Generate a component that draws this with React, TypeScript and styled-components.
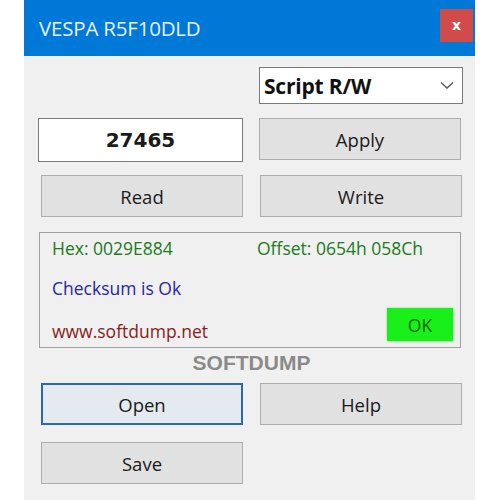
import React from "react";
import styled, { createGlobalStyle } from "styled-components";

const Global = createGlobalStyle`
  html, body { margin: 0; padding: 0; background: #ffffff; }
  body { font-family: "Open Sans", "Noto Sans", sans-serif; }
`;

const Window = styled.div`
  width: 451px;
  height: 500px;
  margin-left: 24px;
  background: #f0f0f0;
  display: flex;
  flex-direction: column;
`;

const TitleBar = styled.div`
  height: 56px;
  background: #0078d7;
  display: flex;
  align-items: center;
  justify-content: space-between;
  padding: 0 2px 0 15px;
  box-sizing: border-box;
`;

const Title = styled.span`
  color: #e6f2ff;
  font-size: 20.5px;
  letter-spacing: -0.2px;
  margin-top: -1px;
`;

const CloseBox = styled.div`
  width: 33px;
  height: 33px;
  margin-top: -6px;
  background: #d24b4b;
  color: #ffffff;
  font-family: "DejaVu Sans", sans-serif;
  font-weight: bold;
  font-size: 14px;
  display: flex;
  align-items: center;
  justify-content: center;
`;

const Content = styled.div`
  display: flex;
  flex-direction: column;
  padding: 11px 13px 0 17px;
`;

const Row = styled.div<{ $top: number; $end?: boolean }>`
  display: flex;
  justify-content: ${(p) => (p.$end ? "flex-end" : "flex-start")};
  align-items: flex-start;
  gap: 17px;
  margin-top: ${(p) => p.$top}px;
`;

const Combo = styled.div`
  width: 204px;
  height: 37px;
  box-sizing: border-box;
  border: 1px solid #7a7a7a;
  background: #ffffff;
  display: flex;
  align-items: center;
  justify-content: space-between;
  padding: 0 8px 0 4px;
  margin-right: -1px;
  font-weight: 700;
  font-size: 21px;
  letter-spacing: -0.2px;
  color: #111;
`;

const NumberBox = styled.div`
  width: 205px;
  height: 44px;
  box-sizing: border-box;
  margin-left: -3px;
  margin-right: -1px;
  border: 1px solid #7a7a7a;
  background: #ffffff;
  display: flex;
  align-items: center;
  justify-content: center;
  font-family: "DejaVu Sans", sans-serif;
  font-weight: bold;
  font-size: 20px;
  color: #1a1a1a;
`;

const Button = styled.div<{ $focused?: boolean }>`
  width: 202px;
  height: 42px;
  box-sizing: border-box;
  border: ${(p) => (p.$focused ? "2px solid #2a6aa8" : "1px solid #adadad")};
  background: ${(p) => (p.$focused ? "#e4eaf0" : "#e1e1e1")};
  display: flex;
  align-items: center;
  justify-content: center;
  font-size: 18.5px;
  color: #1a1a1a;
`;

const Panel = styled.div`
  margin-top: 15px;
  margin-left: -2px;
  width: 422px;
  height: 116px;
  box-sizing: border-box;
  border: 1px solid #a0a0a0;
  display: grid;
  grid-template-columns: 205px 1fr;
  grid-template-rows: 30px 42px 42px;
  padding: 0 7px 0 12px;
  font-size: 17.5px;
`;

/* $shift nudges a line inside its grid cell: positive pushes it down, negative lifts it */
const Line = styled.div<{ $color: string; $shift?: number }>`
  color: ${(p) => p.$color};
  display: flex;
  align-items: center;
  padding-top: ${(p) => Math.max(p.$shift ?? 0, 0)}px;
  padding-bottom: ${(p) => Math.max(-(p.$shift ?? 0), 0)}px;
  white-space: nowrap;
`;

const OkBadge = styled.div`
  align-self: end;
  justify-self: end;
  margin-bottom: 6px;
  width: 66px;
  height: 33px;
  background: #19f019;
  color: #116611;
  display: flex;
  align-items: center;
  justify-content: center;
  font-size: 17.5px;
  box-shadow: 0 0 2px #6ce06c;
`;

const Brand = styled.div`
  text-align: center;
  margin-top: 3px;
  font-family: "Liberation Sans", Arial, sans-serif;
  font-weight: 700;
  font-size: 21px;
  color: #8a8a8a;
  height: 24px;
  line-height: 24px;
`;

const Chevron = () => (
  <svg width="14" height="9" viewBox="0 0 14 9">
    <path d="M1 1.5 L7 7 L13 1.5" fill="none" stroke="#555" strokeWidth="1.3" />
  </svg>
);

export default function App() {
  return (
    <>
      <Global />
      <Window>
        <TitleBar>
          <Title>VESPA R5F10DLD</Title>
          <CloseBox>x</CloseBox>
        </TitleBar>
        <Content>
          <Row $top={0} $end>
            <Combo>
              <span>Script R/W</span>
              <Chevron />
            </Combo>
          </Row>
          <Row $top={14}>
            <NumberBox>27465</NumberBox>
            <Button>Apply</Button>
          </Row>
          <Row $top={13}>
            <Button>Read</Button>
            <Button>Write</Button>
          </Row>
          <Panel>
            <Line $color="#207a20">Hex: 0029E884</Line>
            <Line $color="#207a20">Offset: 0654h 058Ch</Line>
            <Line $color="#2626a0" $shift={8}>Checksum is Ok</Line>
            <span />
            <Line $color="#8a1c1c" $shift={10}>www.softdump.net</Line>
            <OkBadge>OK</OkBadge>
          </Panel>
          <Brand>SOFTDUMP</Brand>
          <Row $top={8}>
            <Button $focused>Open</Button>
            <Button>Help</Button>
          </Row>
          <Row $top={17}>
            <Button>Save</Button>
          </Row>
        </Content>
      </Window>
    </>
  );
}
